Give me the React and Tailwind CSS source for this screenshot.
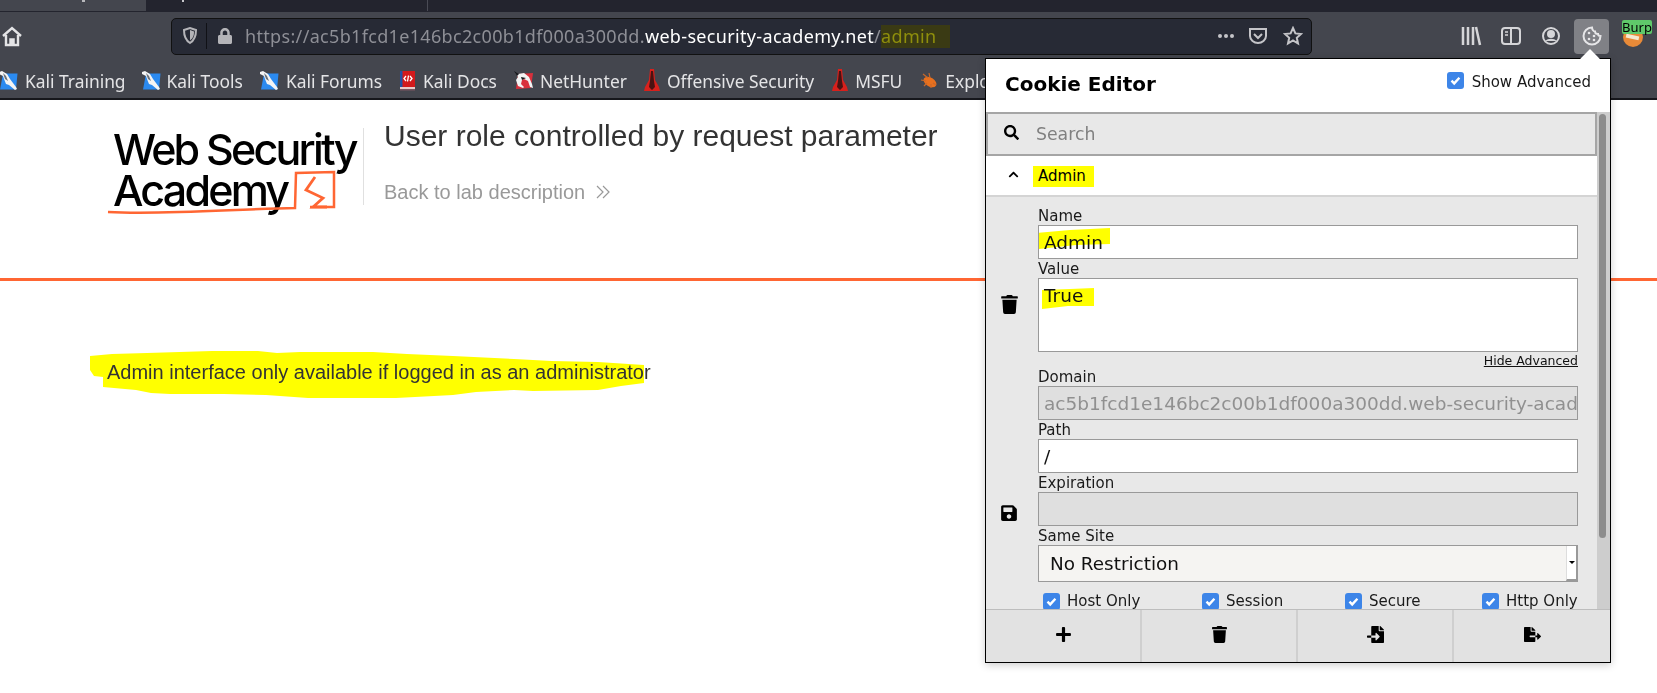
import { FaSearch, FaTrash, FaSave, FaPlus, FaChevronUp, FaFileImport, FaFileExport, FaLock } from "react-icons/fa";

const sans = "font-['Noto_Sans',sans-serif]";
const dejavu = "font-['DejaVu_Sans',sans-serif]";

const KaliIcon = () => (
  <svg width="19" height="20" viewBox="0 0 19 20" className="shrink-0">
    <path d="M4 2.500h14.500L17 18.500H1z" fill="#2b8af0" />
    <path d="M0 1l3-1 5 3 3 5 6 8 1 2-2 1-6-5-3-1-2-5-1-3-4-2z" fill="#f4f4f4" />
    <path d="M4 2l3 3 2 5-3-2z" fill="#6a7078" />
  </svg>
);

const DocsIcon = () => (
  <svg width="15" height="21" viewBox="0 0 15 21" className="shrink-0">
    <path d="M0 1h15v16H0z" fill="#d3191c" />
    <path d="M0 1h2.500v16H0z" fill="#2450a0" />
    <path d="M0 17h15v2H0z" fill="#e9c9c9" />
    <path d="M0 19h15v1.500H0z" fill="#7a5560" />
    <path d="M6 6L4 8.500 6 11M10 6l2 2.500L10 11M8.500 5.500l-1 6" stroke="#fff" strokeWidth="1.300" fill="none" />
  </svg>
);

const HunterIcon = () => (
  <svg width="20" height="20" viewBox="0 0 20 20" className="shrink-0">
    <path d="M4 3l15-1-2 15-15 1z" fill="#d9303c" />
    <path d="M1 1l3 2 6-1 5 4 3 7 1 4-3-1-2-6-4-2-2 1-1 4 3 3-1 1-5-2-2-6 2-3z" fill="#f4f4f4" />
    <path d="M0 0l5 3-2 2z" fill="#15161a" />
    <path d="M7 6l5 1-4 2z" fill="#15161a" />
  </svg>
);

const TowerIcon = () => (
  <svg width="16" height="23" viewBox="0 0 16 23" className="shrink-0">
    <path d="M6 0h4l1 11 4 7 1 4H0l1-4 4-7z" fill="#d8201c" />
    <path d="M7 2h2l1 10 1 6-3 3-3-3 1-6z" fill="#4a1212" />
  </svg>
);

const ExploitIcon = () => (
  <svg width="18" height="18" viewBox="0 0 18 18" className="shrink-0">
    <ellipse cx="10" cy="10" rx="7" ry="4.500" transform="rotate(32 10 10)" fill="#e8701e" />
    <path d="M3 2l5 4M1 8l5 1M9 1l1 5M4 14l3-3M11 16l0-4M16 13l-3-2" stroke="#c9682a" strokeWidth="1.200" />
  </svg>
);

const Bookmark = ({ icon, label, gap = "gap-[7px]" }) => (
  <div className={`flex items-center shrink-0 whitespace-nowrap ${gap}`}>
    {icon}
    <span>{label}</span>
  </div>
);

const Check = ({ label, className = "", boxClass = "" }) => (
  <div className={`flex items-center gap-[7px] whitespace-nowrap ${className}`}>
    <span className={`w-[17px] h-[17px] shrink-0 rounded-[3px] bg-[#3d85e8] flex items-center justify-center ${boxClass}`}>
      <svg width="13" height="13" viewBox="0 0 12 12">
        <path d="M2.300 6.200l2.500 2.500 4.800-5.200" stroke="#fff" strokeWidth="2.200" fill="none" />
      </svg>
    </span>
    <span>{label}</span>
  </div>
);

const Field = ({ label, children }) => (
  <div>
    <div className="h-[19px] leading-[21px] text-[15px] text-[#1a1a1a]">{label}</div>
    {children}
  </div>
);

const inputBox = "h-[34px] border border-[#999] text-[18.5px] leading-[34px] pl-[5px] text-[#111] overflow-hidden whitespace-nowrap";

const CookieEditor = () => (
  <div className={`absolute left-[985px] top-[58px] w-[626px] h-[605px] bg-white border border-black shadow-[0_2px_8px_rgba(0,0,0,0.2)] flex flex-col ${dejavu}`}>
    {/* arrow up to the toolbar button */}
    <div className="absolute left-[597px] top-[-7px] w-[14px] h-[14px] bg-white rotate-45" />

    <div className="h-[53px] flex items-start justify-between pl-[19px] pr-[19px] shrink-0">
      <div className="text-[20px] font-bold text-black leading-[26px] mt-[12px]">Cookie Editor</div>
      <Check label="Show Advanced" className="text-[15px] text-[#1a1a1a] mt-[12px] gap-[8px]" boxClass="-mt-1" />
    </div>

    <div className="flex-1 flex min-h-0">
      <div className="w-[612px] flex flex-col min-h-0 overflow-hidden">
        <div className="h-[44px] shrink-0 bg-[#e8e8e8] border-2 border-[#a5a5a5] flex items-center text-[17.3px] text-[#808080]">
          <FaSearch className="ml-[16px] text-black mb-1" size={15} />
          <span className="ml-[17px] mt-[1px]">Search</span>
        </div>
        <div className="h-[41px] shrink-0 bg-white border-b-2 border-[#d4d4d4] flex items-center text-[15px] text-black">
          <FaChevronUp className="ml-[22px] mb-[2px]" size={11} />
          <span className="relative ml-[19px] mt-[1px]">
            <span className="absolute left-[-5px] right-[-8px] top-[1px] bottom-0 bg-[#ffff00]" />
            <span className="relative">Admin</span>
          </span>
        </div>

        <div className="flex-1 bg-[#e8e8e8] flex min-h-0 overflow-hidden">
          <div className="w-[52px] shrink-0 flex flex-col items-center pt-[98px] pr-[6px]">
            <FaTrash size={19} className="text-black" />
            <FaSave size={18} className="text-black mt-[190px]" />
          </div>
          <div className="w-[540px] pt-[9px] shrink-0">
            <Field label="Name">
              <div className={`${inputBox} bg-white relative`}>
                <svg className="absolute left-[-3px] top-[1px]" width="80" height="24" viewBox="0 0 80 24">
                  <path d="M1 6l33-3 40-2v16l-34 1-38 4z" fill="#ffff00" />
                </svg>
                <span className="relative">Admin</span>
              </div>
            </Field>
            <Field label="Value">
              <div className={`${inputBox} !h-[74px] bg-white relative`}>
                <svg className="absolute left-[1px] top-[9px]" width="56" height="22" viewBox="0 0 56 22">
                  <path d="M2 2l28-1 24-1 0 18-26 0-26 3z" fill="#ffff00" />
                </svg>
                <span className="relative">True</span>
              </div>
              <div className="h-[15px] leading-[17px] text-right text-[12.5px] underline text-[#111]">Hide Advanced</div>
            </Field>
            <Field label="Domain">
              <div className={`${inputBox} bg-[#dfdfdf] text-[#909090]`}>ac5b1fcd1e146bc2c00b1df000a300dd.web-security-academy.net</div>
            </Field>
            <Field label="Path">
              <div className={`${inputBox} bg-white`}>/</div>
            </Field>
            <Field label="Expiration">
              <div className={`${inputBox} bg-[#dfdfdf]`} />
            </Field>
            <Field label="Same Site">
              <div className="h-[37px] border border-[#999] bg-[#f5f4f2] flex items-center justify-between text-[18.4px] text-[#111] pl-[11px]">
                <span>No Restriction</span>
                <div className="w-[11px] h-full bg-white border-l border-[#ddd] border-b-2 border-b-[#999] border-r border-r-[#999] flex items-center justify-center">
                  <span className="w-0 h-0 border-l-[3px] border-r-[3px] border-t-[3px] border-l-transparent border-r-transparent border-t-black" />
                </div>
              </div>
            </Field>
            <div className="flex text-[15px] text-[#1a1a1a] mt-[8px] pl-[5px]">
              <Check label="Host Only" className="w-[159px]" />
              <Check label="Session" className="w-[143px]" />
              <Check label="Secure" className="w-[137px]" />
              <Check label="Http Only" />
            </div>
          </div>
        </div>
      </div>
      {/* scrollbar */}
      <div className="w-[13px] bg-[#cdcdcd] pt-[2px] pl-[2px] shrink-0">
        <div className="w-[7px] h-[424px] rounded-full bg-[#8c8c8c]" />
      </div>
    </div>

    <div className="h-[53px] shrink-0 bg-[#e2e2e2] border-t border-[#bdbdbd] grid grid-cols-4 text-black">
      {[FaPlus, FaTrash, FaFileImport, FaFileExport].map((Icon, i) => (
        <div key={i} className={`flex items-center justify-center pb-1 ${i < 3 ? "border-r-2 border-[#cfcfcf]" : ""}`}>
          <Icon size={17} />
        </div>
      ))}
    </div>
  </div>
);

const Logo = () => (
  <div className="relative w-[250px] h-[90px] font-['Inter',sans-serif] font-medium text-black text-[43px] leading-[41px] tracking-[-2.8px] whitespace-nowrap">
    <div className="pt-[1px]">Web Security</div>
    <div>Academy</div>
    <svg className="absolute left-[-8px] top-[40px]" width="240" height="48" viewBox="0 0 240 48" fill="none" stroke="#ff6633">
      <path d="M3 44C60 47 130 41 190 40L191 5 229 4 229 39 205 39" strokeWidth="2.500" />
      <path d="M210 9L201 22 218 30 208 39 222 39" strokeWidth="2.800" />
    </svg>
  </div>
);

const App = () => (
  <div className="relative w-[1657px] h-[693px] overflow-hidden bg-white">
    {/* tab strip */}
    <div className="h-[11px] bg-[#23242e] flex">
      <div className="w-[146px] bg-[#44464e] relative">
        <span className="absolute left-[82px] top-0 w-[3px] h-[2px] bg-[#b8b8bc]" />
      </div>
      <div className="w-[282px] border-r border-[#4a4b55] relative">
        <span className="absolute left-[36px] top-0 w-[2px] h-[2px] bg-[#c8c8cc]" />
      </div>
    </div>

    {/* toolbar */}
    <div className={`h-[47px] pt-[2px] bg-[#44464e] border-t border-[#23242e] flex items-center text-[#d5d5d8] ${sans}`}>
      <svg width="22" height="22" viewBox="0 0 22 22" className="ml-[1px]" fill="none" stroke="#e4e4e6" strokeWidth="2.400">
        <path d="M2 11l9-8 9 8" />
        <path d="M5 10v10h12V10" />
        <path d="M9 20v-6h4v6" fill="#e4e4e6" strokeWidth="1.500" />
      </svg>
      <div className="ml-[148px] w-[1141px] h-[37px] rounded-[5px] bg-[#272a35] border border-[#111] flex items-center text-[18px]">
        <svg width="16" height="18" viewBox="0 0 16 18" className="ml-[10px]" fill="none">
          <path d="M2 3l6-2 6 2c0 6-1 10-6 13C3 13 2 9 2 3z" stroke="#b4b4b8" strokeWidth="2" />
          <path d="M8 3l4 1.500C12 9 11 11 8 13.500z" fill="#b4b4b8" />
        </svg>
        <span className="w-px h-[26px] bg-[#101116] ml-[8px]" />
        <FaLock size={16} className="text-[#b4b4b8] ml-[10px]" />
        <div className="ml-[12px] tracking-[0.33px] whitespace-nowrap">
          <span className="text-[#8e8f96]">https://ac5b1fcd1e146bc2c00b1df000a300dd.</span>
          <span className="text-white">web-security-academy.net</span>
          <span className="text-[#8e8f96]">/</span>
          <span className="relative">
            <span className="absolute left-0 top-[1px] bottom-0 w-[69px] bg-[#3a3a14]" />
            <span className="relative text-[#8f8f0c]">admin</span>
          </span>
        </div>
        <div className="ml-auto flex items-center mr-[8px]">
          <span className="flex gap-[2px]">
            <span className="w-1 h-1 rounded-full bg-[#c4c4c8]" />
            <span className="w-1 h-1 rounded-full bg-[#c4c4c8]" />
            <span className="w-1 h-1 rounded-full bg-[#c4c4c8]" />
          </span>
          <svg width="20" height="20" viewBox="0 0 20 20" className="ml-[14px]" fill="none" stroke="#c4c4c8" strokeWidth="2">
            <path d="M2 3h16v7c0 4-4 7-8 7s-8-3-8-7z" />
            <path d="M6 8l4 4 4-4" />
          </svg>
          <svg width="20" height="20" viewBox="0 0 20 20" className="ml-[15px]" fill="none" stroke="#c4c4c8" strokeWidth="2">
            <path d="M10 2l2.400 5.400 5.600.6-4.200 3.800 1.200 5.700-5-3-5 3 1.200-5.700L2 8l5.600-.6z" />
          </svg>
        </div>
      </div>
      <svg width="22" height="20" viewBox="0 0 22 20" className="ml-[148px]" fill="none" stroke="#d5d5d8" strokeWidth="2.500">
        <path d="M3 1v18M8 1v18M13 1v18M16 1l4 18" />
      </svg>
      <svg width="20" height="18" viewBox="0 0 20 18" className="ml-[19px]" fill="none" stroke="#d5d5d8" strokeWidth="2">
        <rect x="1" y="1" width="18" height="16" rx="3" />
        <path d="M10 1v16" />
        <path d="M4 5h3M4 8h3" strokeWidth="1.400" />
      </svg>
      <svg width="20" height="20" viewBox="0 0 20 20" className="ml-[20px]" fill="none" stroke="#d5d5d8" strokeWidth="2">
        <circle cx="10" cy="10" r="8" />
        <circle cx="10" cy="8" r="3" fill="#d5d5d8" />
        <path d="M4.500 15c2-3 9-3 11 0" fill="#d5d5d8" stroke="none" />
      </svg>
      {/* cookie button */}
      <div className="ml-[13px] w-[35px] h-[35px] rounded-[4px] bg-[#808186] flex items-center justify-center">
        <svg width="20" height="20" viewBox="0 0 20 20" fill="none">
          <path d="M10 1.500a8.500 8.500 0 1 0 8.500 8.500c-1.500 0-2.500-1-2.500-2-1.500 0-3-1-3-2.500-1.500 0-3-2-3-4z" stroke="#e6e6e8" strokeWidth="2" />
          <circle cx="7" cy="7" r="1.300" fill="#e6e6e8" />
          <circle cx="12" cy="10" r="1.300" fill="#e6e6e8" />
          <circle cx="7" cy="13" r="1.300" fill="#e6e6e8" />
          <circle cx="12" cy="14" r="1.300" fill="#e6e6e8" />
        </svg>
      </div>
      {/* burp extension */}
      <div className="relative ml-[13px] w-[30px] h-[30px] -mt-[3px]">
        <span className="absolute left-[1px] top-[7px] w-[20px] h-[20px] rounded-full bg-[#e88a38]" />
        <span className="absolute left-[4px] top-[15px] w-[13px] h-[4px] bg-[#f4e8d0] rotate-12" />
        <span className="absolute left-0 top-0 w-[30px] h-[14px] rounded-[2px] bg-[#5fc96a] text-black text-[13px] leading-[14px] text-center font-['Noto_Sans',sans-serif]">Burp</span>
      </div>
    </div>

    {/* bookmarks */}
    <div className={`h-[42px] pt-[6px] bg-[#44464e] border-b-2 border-[#16171c] flex items-center text-[17.4px] text-[#e4e4e6] overflow-hidden ${sans}`}>
      <div className="-ml-[1px]"><Bookmark icon={<KaliIcon />} label="Kali Training" /></div>
      <div className="ml-[16px]"><Bookmark icon={<KaliIcon />} label="Kali Tools" gap="gap-[6px]" /></div>
      <div className="ml-[17px]"><Bookmark icon={<KaliIcon />} label="Kali Forums" /></div>
      <div className="ml-[18px]"><Bookmark icon={<DocsIcon />} label="Kali Docs" gap="gap-[8px]" /></div>
      <div className="ml-[17px]"><Bookmark icon={<HunterIcon />} label="NetHunter" gap="gap-[6px]" /></div>
      <div className="ml-[17px]"><Bookmark icon={<TowerIcon />} label="Offensive Security" /></div>
      <div className="ml-[18px]"><Bookmark icon={<TowerIcon />} label="MSFU" /></div>
      <div className="ml-[18px]"><Bookmark icon={<ExploitIcon />} label="Exploit-DB" /></div>
    </div>

    {/* page header */}
    <div className="h-[181px] border-b-[3px] border-[#ff6633] flex items-start pl-[113px] pt-[28px] font-['Liberation_Sans',sans-serif]">
      <Logo />
      <div className="border-l border-[#e0e0e0] h-[77px] pl-5">
        <h1 className="text-[30px] leading-[32px] -mt-[8px] text-[#333] whitespace-nowrap">User role controlled by request parameter</h1>
        <div className="flex items-center text-[#999] text-[20px] mt-[25px] gap-[10px]">
          Back to lab description
          <svg width="16" height="16" viewBox="0 0 16 16" fill="none" stroke="#999" strokeWidth="1.200">
            <path d="M2 2l6 6-6 6M8 2l6 6-6 6" />
          </svg>
        </div>
      </div>
    </div>

    {/* message with marker scribble */}
    <div className="relative pl-[107px] pt-[79px] text-[20px] leading-[24px] text-[#333] font-['Liberation_Sans',sans-serif]">
      <svg className="absolute left-[90px] top-[70px] mix-blend-multiply" width="560" height="50" viewBox="0 0 560 50">
        <path
          d="M0 5l22-2 35-1 65-2 46 0 19 2 23-1 73 0 34 2 46 2 61 3 38 2 46 1 46 3v18l-23 3-23 4-65 1-19-1-38 2-23 3-57 3-88 0-42-3-42-1-54 0-19-1-15-3-33-3v-10l-9-1-4-6z"
          fill="#ffff00"
        />
      </svg>
      <p className="relative">Admin interface only available if logged in as an administrator</p>
    </div>

    <CookieEditor />
  </div>
);

export default App;
